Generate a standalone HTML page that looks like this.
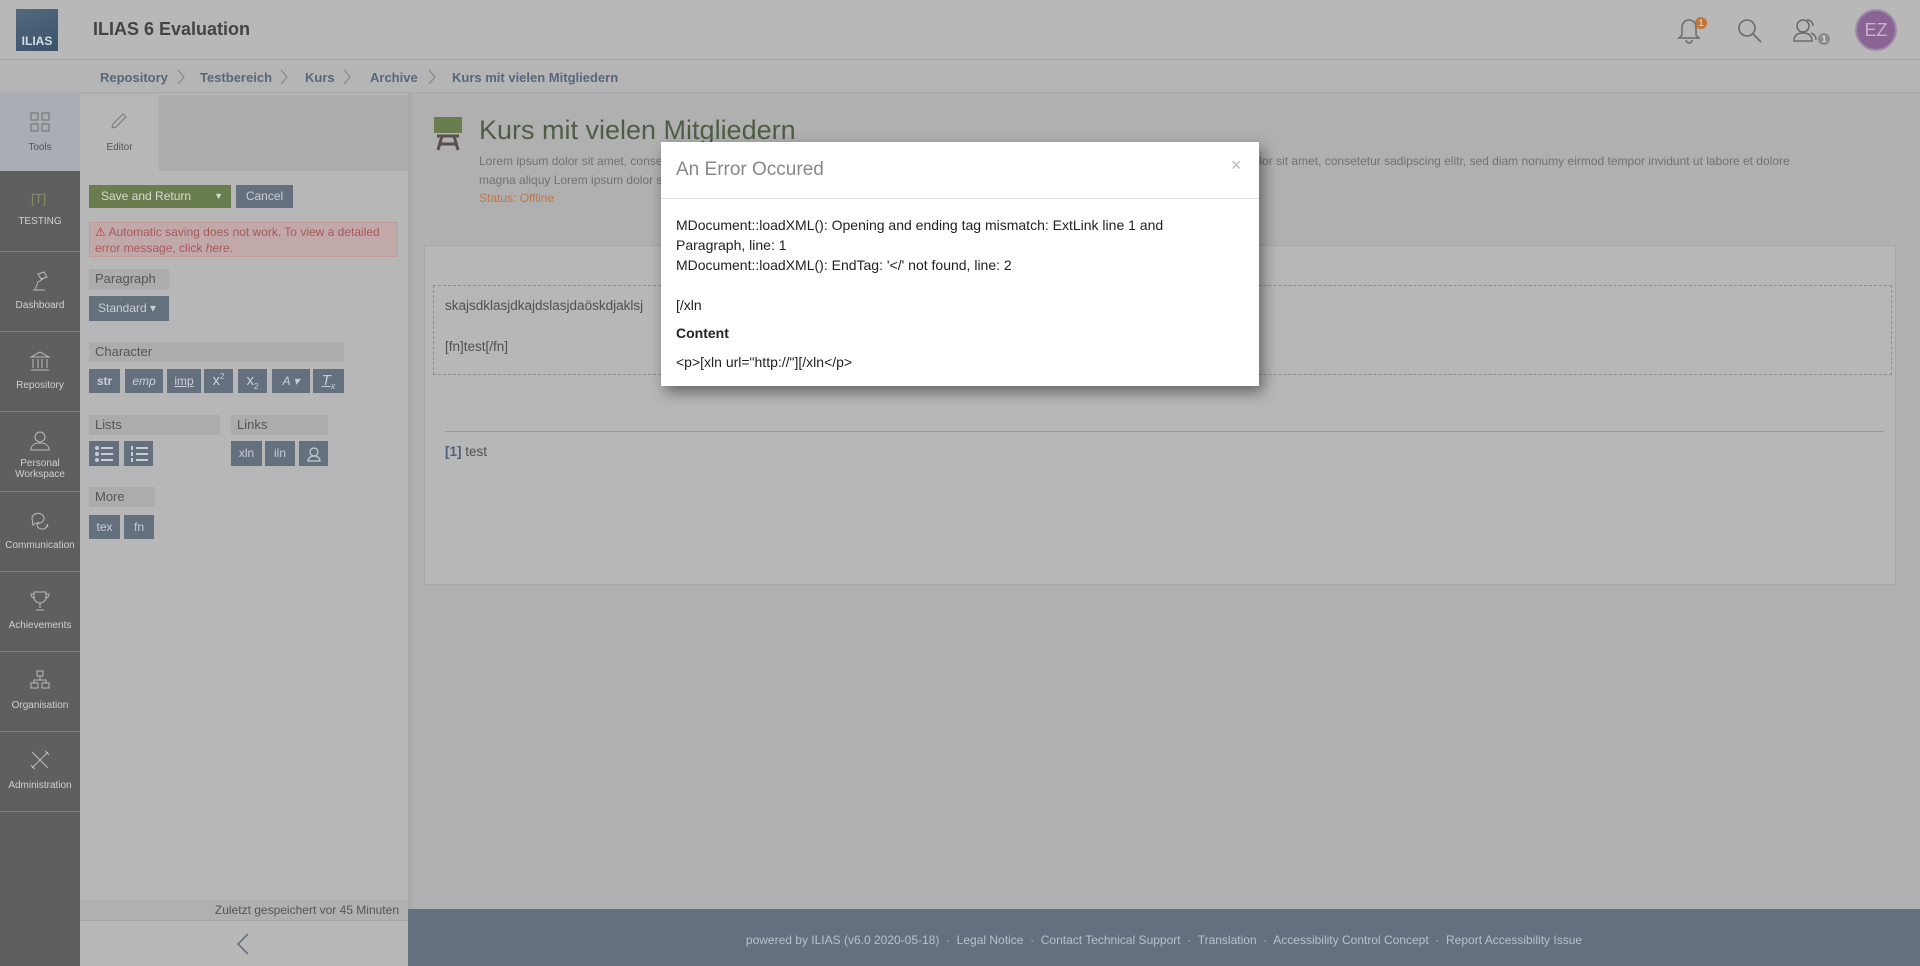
<!DOCTYPE html>
<html><head><meta charset="utf-8"><style>
*{box-sizing:border-box;margin:0;padding:0}
html,body{width:1920px;height:966px;overflow:hidden}
body{background:#b0b0b0;font-family:"Liberation Sans",sans-serif;position:relative}
.a{position:absolute}
.hdr{left:0;top:0;width:1920px;height:60px;background:#b8b8b8;border-bottom:1px solid #a6a6a6}
.bc{left:0;top:60px;width:1920px;height:33px;background:#b5b5b5;border-bottom:1px solid #a9a9a9}
.bc span{position:absolute;top:10px;font-size:13px;font-weight:bold;color:#56677c}
.bc svg{position:absolute;top:9px}
.mb{left:0;top:94px;width:80px;height:872px;background:#5f5f5f}
.mi{position:absolute;left:0;width:80px;height:80px;border-bottom:1px solid #7c7c7c;color:#d0d0d0;font-size:10px;text-align:center}
.mi svg{position:absolute;left:30px;top:18px}
.mi .l{position:absolute;left:0;width:80px;top:48px;line-height:11px}
.sl{left:80px;top:94px;width:328px;height:872px;background:#b7b7b7}
.btn{position:absolute;background:#65707f;color:#c9ced6;font-size:12px;text-align:center;line-height:24px;height:24px}
.btn sup,.btn sub{line-height:0}
.lab{position:absolute;background:#acacac;color:#555;font-size:13px;padding-left:6px;line-height:20px}
.ft{left:408px;top:909px;width:1512px;height:60px;background:#646f7f;color:#b8c0cc;font-size:12px;text-align:center;line-height:62px}
.md{left:661px;top:142px;width:598px;height:244px;background:#fff;box-shadow:4px 6px 14px rgba(0,0,0,.45)}
.md p{position:absolute;left:15px;font-size:14px;color:#222;white-space:nowrap}
</style></head><body>
<div class="a hdr"></div>
<div class="a" style="left:16px;top:9px;width:42px;height:42px;background:linear-gradient(160deg,#52687d,#3a536b);color:#d4dbe2;font-weight:bold;font-size:12px;text-align:center;padding-top:25px">ILIAS</div>
<div class="a" style="left:93px;top:19px;font-size:18px;font-weight:bold;color:#444">ILIAS 6 Evaluation</div>
<svg class="a" style="left:1676px;top:17px" width="26" height="28" viewBox="0 0 26 28" fill="none" stroke="#6a6a6a" stroke-width="1.5"><path d="M13 3c-5 0-7 4-7 8v7l-3 3h20l-3-3v-7c0-4-2-8-7-8zM10 23a3 3 0 0 0 6 0"/></svg>
<div class="a" style="left:1695px;top:17px;width:12px;height:12px;border-radius:6px;background:#c0753a;color:#eee;font-size:9px;text-align:center;line-height:12px">1</div>
<svg class="a" style="left:1737px;top:18px" width="26" height="26" viewBox="0 0 26 26" fill="none" stroke="#6a6a6a" stroke-width="1.6"><circle cx="10" cy="10" r="8"/><path d="M16 16l8 8"/></svg>
<svg class="a" style="left:1792px;top:17px" width="26" height="28" viewBox="0 0 26 28" fill="none" stroke="#6a6a6a" stroke-width="1.5"><circle cx="11" cy="9" r="6"/><path d="M2 24c0-6 4-8 9-8s9 2 9 8z"/><path d="M15 3c4 0 6 3 6 6M19 16c3 1 5 3 5 7"/></svg>
<div class="a" style="left:1818px;top:33px;width:12px;height:12px;border-radius:6px;background:#8c8c8c;color:#ddd;font-size:9px;text-align:center;line-height:12px;font-weight:bold">1</div>
<div class="a" style="left:1855px;top:9px;width:42px;height:42px;border-radius:21px;background:#8a6494;border:2px solid #a08ca8;color:#c6b4cc;font-size:18px;text-align:center;line-height:38px">EZ</div>
<div class="a bc"><span style="left:100px">Repository</span><svg style="left:177px" width="8" height="16" viewBox="0 0 8 16" fill="none" stroke="#8a8a8a" stroke-width="1.3"><path d="M1 1l6 7-6 7"/></svg><span style="left:200px">Testbereich</span><svg style="left:280px" width="8" height="16" viewBox="0 0 8 16" fill="none" stroke="#8a8a8a" stroke-width="1.3"><path d="M1 1l6 7-6 7"/></svg><span style="left:305px">Kurs</span><svg style="left:343px" width="8" height="16" viewBox="0 0 8 16" fill="none" stroke="#8a8a8a" stroke-width="1.3"><path d="M1 1l6 7-6 7"/></svg><span style="left:370px">Archive</span><svg style="left:428px" width="8" height="16" viewBox="0 0 8 16" fill="none" stroke="#8a8a8a" stroke-width="1.3"><path d="M1 1l6 7-6 7"/></svg><span style="left:452px">Kurs mit vielen Mitgliedern</span></div>

<div class="a mb">
<div class="mi" style="top:0;height:77px;background:#a9aeb5;color:#555;border:none"><svg width="20" height="20" viewBox="0 0 20 20" fill="none" stroke="#707070"><rect x="1" y="1" width="7" height="7"/><rect x="12" y="1" width="7" height="7"/><rect x="1" y="12" width="7" height="7"/><rect x="12" y="12" width="7" height="7"/></svg><div class="l" style="top:48px">Tools</div></div>
<div class="mi" style="top:77px;height:81px"><div style="position:absolute;left:31px;top:20px;color:#8a8a6a;font-size:13px">[T]</div><div class="l" style="top:45px">TESTING</div></div>
<div class="mi" style="top:158px"><svg width="20" height="22" viewBox="0 0 20 22" fill="none" stroke="#bbb"><path d="M3 20h12M5 20l3-8 5-3M8 4l6-2 3 5-6 2z"/></svg><div class="l">Dashboard</div></div>
<div class="mi" style="top:238px"><svg width="20" height="22" viewBox="0 0 20 22" fill="none" stroke="#bbb"><path d="M1 7l9-5 9 5zM3 9v9M8 9v9M12 9v9M17 9v9M1 20h18"/></svg><div class="l">Repository</div></div>
<div class="mi" style="top:318px"><svg width="20" height="22" viewBox="0 0 20 22" fill="none" stroke="#bbb"><circle cx="10" cy="7" r="5"/><path d="M1 20c0-5 4-7 9-7s9 2 9 7z"/></svg><div class="l" style="top:46px">Personal<br>Workspace</div></div>
<div class="mi" style="top:398px"><svg width="20" height="20" viewBox="0 0 20 20" fill="none" stroke="#bbb"><path d="M2 8a6 5 0 1 1 4 5l-3 2zM9 12a5 4 0 1 0 8 2l1 3"/></svg><div class="l">Communication</div></div>
<div class="mi" style="top:478px"><svg width="20" height="22" viewBox="0 0 20 22" fill="none" stroke="#bbb"><path d="M4 2h12v5a6 6 0 0 1-12 0zM4 4H1c0 3 2 4 3 4M16 4h3c0 3-2 4-3 4M10 13v5M6 20h8"/></svg><div class="l">Achievements</div></div>
<div class="mi" style="top:558px"><svg width="20" height="20" viewBox="0 0 20 20" fill="none" stroke="#bbb"><rect x="7" y="1" width="6" height="5"/><rect x="1" y="13" width="7" height="5"/><rect x="12" y="13" width="7" height="5"/><path d="M10 6v4M4 13v-3h12v3"/></svg><div class="l">Organisation</div></div>
<div class="mi" style="top:638px"><svg width="20" height="20" viewBox="0 0 20 20" fill="none" stroke="#bbb"><path d="M2 2l16 16M18 2L2 18M15 1l4 4M1 15l4 4"/></svg><div class="l">Administration</div></div>
</div>

<div class="a sl">
<div class="a" style="left:79px;top:1px;width:249px;height:76px;background:#acacac"></div>
<svg class="a" style="left:30px;top:18px" width="18" height="18" viewBox="0 0 18 18" fill="none" stroke="#777"><path d="M2 16l1-4L13 2l3 3L6 15z"/></svg>
<div class="a" style="left:0;top:48px;width:79px;text-align:center;font-size:10px;color:#555">Editor</div>
</div>
<div class="a" style="left:89px;top:185px;width:142px;height:23px;background:#6a7d4f;color:#d8dccf;font-size:12px;line-height:23px;padding-left:12px">Save and Return<span style="position:absolute;right:8px;font-size:9px">&#9660;</span></div>
<div class="btn" style="left:236px;top:185px;width:57px;height:23px;line-height:23px">Cancel</div>
<div class="a" style="left:89px;top:222px;width:309px;height:35px;background:#c2a9a9;border:1px solid #c39a9a;color:#a85858;font-size:12px;line-height:16px;padding:1px 6px 0 5px"><span style="color:#b03a3a">&#9888;</span> Automatic saving does not work. To view a detailed error message, click <i>here</i>.</div>
<div class="lab" style="left:89px;top:269px;width:80px;height:21px">Paragraph</div>
<div class="btn" style="left:89px;top:296px;width:80px;height:25px;text-align:left;padding-left:9px">Standard &#9662;</div>
<div class="lab" style="left:89px;top:342px;width:255px;height:20px">Character</div>
<div class="btn" style="left:89px;top:369px;width:31px;font-weight:bold">str</div>
<div class="btn" style="left:125px;top:369px;width:38px;font-style:italic">emp</div>
<div class="btn" style="left:167px;top:369px;width:34px;text-decoration:underline">imp</div>
<div class="btn" style="left:204px;top:369px;width:29px;font-size:15px">x<sup style="font-size:8px">2</sup></div>
<div class="btn" style="left:238px;top:369px;width:29px;font-size:15px">x<sub style="font-size:8px">2</sub></div>
<div class="btn" style="left:272px;top:369px;width:38px;font-style:italic">A &#9662;</div>
<div class="btn" style="left:313px;top:369px;width:31px;font-style:italic;font-size:15px;text-decoration:underline">T<sub style="font-size:9px">x</sub></div>
<div class="lab" style="left:89px;top:415px;width:131px;height:20px">Lists</div>
<div class="lab" style="left:231px;top:415px;width:97px;height:20px">Links</div>
<div class="btn" style="left:89px;top:441px;width:30px;height:25px"><svg width="18" height="16" viewBox="0 0 18 16" style="margin-top:5px" fill="#c9ced6"><circle cx="2" cy="2" r="2"/><circle cx="2" cy="8" r="2"/><circle cx="2" cy="14" r="2"/><rect x="6" y="1" width="12" height="2"/><rect x="6" y="7" width="12" height="2"/><rect x="6" y="13" width="12" height="2"/></svg></div>
<div class="btn" style="left:124px;top:441px;width:29px;height:25px"><svg width="18" height="16" viewBox="0 0 18 16" style="margin-top:5px" fill="#c9ced6"><rect x="1" y="0" width="2" height="4"/><rect x="1" y="6" width="2" height="4"/><rect x="1" y="12" width="2" height="4"/><rect x="6" y="1" width="12" height="2"/><rect x="6" y="7" width="12" height="2"/><rect x="6" y="13" width="12" height="2"/></svg></div>
<div class="btn" style="left:231px;top:441px;width:31px;height:25px">xln</div>
<div class="btn" style="left:265px;top:441px;width:30px;height:25px">iln</div>
<div class="btn" style="left:299px;top:441px;width:29px;height:25px"><svg width="16" height="16" viewBox="0 0 16 16" style="margin-top:5px" fill="none" stroke="#c9ced6" stroke-width="1.2"><circle cx="8" cy="6" r="4"/><path d="M2 15c0-3 3-5 6-5s6 2 6 5z"/></svg></div>
<div class="lab" style="left:89px;top:487px;width:66px;height:20px">More</div>
<div class="btn" style="left:89px;top:515px;width:31px;height:24px">tex</div>
<div class="btn" style="left:124px;top:515px;width:30px;height:24px">fn</div>
<div class="a" style="left:80px;top:900px;width:328px;height:21px;background:#b0b0b0;border-bottom:1px solid #a5a5a5;text-align:right;padding-right:9px;font-size:12px;line-height:21px;color:#555">Zuletzt gespeichert vor 45 Minuten</div>
<svg class="a" style="left:236px;top:932px" width="14" height="24" viewBox="0 0 14 24" fill="none" stroke="#5d6b80" stroke-width="1.5"><path d="M12 2L2 12l10 10"/></svg>

<div class="a" style="left:408px;top:94px;width:4px;height:815px;background:#a9a9a9"></div>
<svg class="a" style="left:433px;top:117px" width="30" height="34" viewBox="0 0 30 34"><rect x="1" y="0" width="28" height="16" fill="#6a7d4f"/><path d="M4 19h22M9 19L5 33M21 19l4 14M7 27h16" stroke="#5a4f4a" stroke-width="3" fill="none"/></svg>
<div class="a" style="left:479px;top:115px;font-size:27px;color:#4e5e45">Kurs mit vielen Mitgliedern</div>
<div class="a" style="left:479px;top:152px;font-size:12px;color:#727272;line-height:18.5px;white-space:nowrap">Lorem ipsum dolor sit amet, consetetur sadipscing elitr, sed diam nonumy eirmod tempor invidunt ut labore et dolore magna aliquy Lorem ipsum dolor sit amet, consetetur sadipscing elitr, sed diam nonumy eirmod tempor invidunt ut labore et dolore<br>magna aliquy Lorem ipsum dolor sit amet, consetetur sadipscing elitr, sed diam nonumy eirmod tempor invidunt ut labore et dolore magna aliquy<br><span style="color:#b8774f">Status: Offline</span></div>
<div class="a" style="left:424px;top:245px;width:1472px;height:340px;background:#b7b7b7;border:1px solid #a6a6a6"></div>
<div class="a" style="left:433px;top:285px;width:1459px;height:90px;border:1px dashed #8e8e8e"></div>
<div class="a" style="left:445px;top:298px;font-size:13.5px;color:#505050">skajsdklasjdkajdslasjdaöskdjaklsj</div>
<div class="a" style="left:445px;top:339px;font-size:13.5px;color:#505050">[fn]test[/fn]</div>
<div class="a" style="left:445px;top:431px;width:1439px;height:1px;background:#999"></div>
<div class="a" style="left:445px;top:444px;font-size:13.5px;color:#505050"><b style="color:#4f6178">[1]</b> test</div>

<div class="a ft">powered by ILIAS (v6.0 2020-05-18) &nbsp;·&nbsp; Legal Notice &nbsp;·&nbsp; Contact Technical Support &nbsp;·&nbsp; Translation &nbsp;·&nbsp; Accessibility Control Concept &nbsp;·&nbsp; Report Accessibility Issue</div>

<div class="a md">
<div class="a" style="left:15px;top:17px;font-size:19px;color:#888">An Error Occured</div>
<div class="a" style="left:570px;top:13px;font-size:18px;color:#bbb">×</div>
<div class="a" style="left:0;top:56px;width:598px;height:1px;background:#e2e2e2"></div>
<p style="top:75px">MDocument::loadXML(): Opening and ending tag mismatch: ExtLink line 1 and</p>
<p style="top:95px">Paragraph, line: 1</p>
<p style="top:115px">MDocument::loadXML(): EndTag: '&lt;/' not found, line: 2</p>
<p style="top:155px">[/xln</p>
<p style="top:183px;font-weight:bold">Content</p>
<p style="top:212px">&lt;p&gt;[xln url="http://"][/xln&lt;/p&gt;</p>
</div>
</body></html>
